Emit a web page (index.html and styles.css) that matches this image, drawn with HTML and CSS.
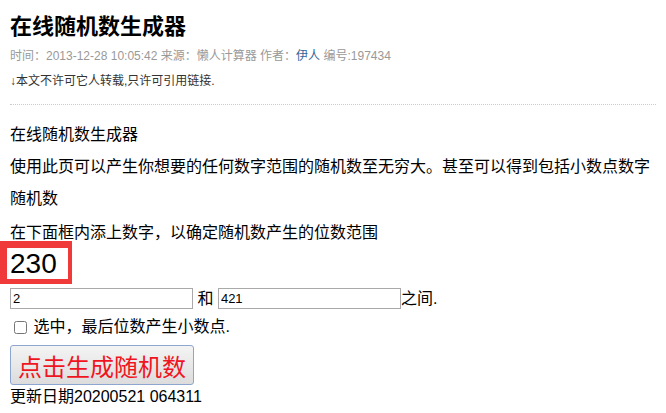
FILE: index.html
```html
<!DOCTYPE html>
<html lang="zh-CN">
<head>
    <meta charset="UTF-8">
    <meta name="viewport" content="width=device-width, initial-scale=1.0">
    <title>在线随机数生成器</title>
    <link rel="stylesheet" href="styles.css">
</head>
<body>
    <div class="article">
        <h1 class="title">在线随机数生成器</h1>
        <div class="info">时间：2013-12-28 10:05:42 来源：懒人计算器 作者：<a href="#">伊人</a> 编号:197434</div>
        <div class="notice">↓本文不许可它人转载,只许可引用链接.</div>

        <div class="content">
            <p class="lead">在线随机数生成器</p>
            <p class="lead">使用此页可以产生你想要的任何数字范围的随机数至无穷大。甚至可以得到包括小数点数字随机数</p>
            <p class="tip">在下面框内添上数字，以确定随机数产生的位数范围</p>

            <div class="result" id="result">230</div>

            <div class="range">
                <input type="text" id="min" value="2"> 和 <input type="text" id="max" value="421">之间.
            </div>

            <label class="decimal"><input type="checkbox" id="decimal"> 选中，最后位数产生小数点.</label>

            <button type="button" class="gen-btn" onclick="generate()">点击生成随机数</button>

            <div class="update">更新日期20200521 064311</div>
        </div>
    </div>

    <script>
        function generate() {
            var min = parseFloat(document.getElementById('min').value) || 0;
            var max = parseFloat(document.getElementById('max').value) || 0;
            if (min > max) {
                var t = min; min = max; max = t;
            }
            var num;
            if (document.getElementById('decimal').checked) {
                num = (Math.random() * (max - min) + min).toFixed(1);
            } else {
                num = Math.floor(Math.random() * (max - min + 1)) + min;
            }
            document.getElementById('result').textContent = num;
        }
    </script>
</body>
</html>
```

FILE: styles.css
```css
* {
    margin: 0;
    padding: 0;
    box-sizing: border-box;
}

body {
    font-family: "Liberation Sans", Arial, "Noto Sans CJK SC", sans-serif;
    color: #000;
    background: #fff;
}

.article {
    padding: 12px 10px 0;
}

.title {
    font-size: 22px;
    line-height: 30px;
    font-weight: bold;
}

.info {
    margin-top: 4px;
    font-size: 12px;
    line-height: 20px;
    color: #999;
}

.info a {
    color: #369;
    text-decoration: none;
}

.notice {
    margin-top: 5px;
    font-size: 12px;
    line-height: 20px;
    color: #333;
}

.content {
    margin-top: 13px;
    padding-top: 14px;
    border-top: 1px dotted #ccc;
    font-size: 16px;
}

.lead {
    line-height: 32px;
}

.tip {
    padding-top: 9px;
    line-height: 17px;
}

.result {
    width: 72px;
    height: 43px;
    margin-left: -10px;
    padding-left: 3px;
    border-style: solid;
    border-color: #f03a3a;
    border-width: 7px 4px 5px 7px;
    font-size: 28px;
    line-height: 31px;
    background: #fff;
}

.range {
    margin-top: 4px;
    line-height: 21px;
}

.range input {
    width: 183px;
    height: 21px;
    padding: 1px 2px;
    border: 1px solid #a9a9a9;
    font-family: "Liberation Sans", Arial, sans-serif;
    font-size: 13px;
    vertical-align: top;
}

.decimal {
    display: block;
    margin-top: 8px;
    line-height: 20px;
}

.decimal input {
    width: 13px;
    height: 13px;
    margin: 0 2px 0 4px;
    vertical-align: -2px;
}

.gen-btn {
    display: block;
    width: 184px;
    height: 40px;
    margin-top: 8px;
    border: 1px solid #8da6cf;
    border-radius: 3px;
    background: linear-gradient(#f4f4f4, #dcdcdc);
    color: #f0141e;
    font-family: "Liberation Sans", Arial, "Noto Sans CJK SC", sans-serif;
    font-size: 24px;
    cursor: pointer;
}

.update {
    margin-top: 2px;
    line-height: 20px;
}
```
